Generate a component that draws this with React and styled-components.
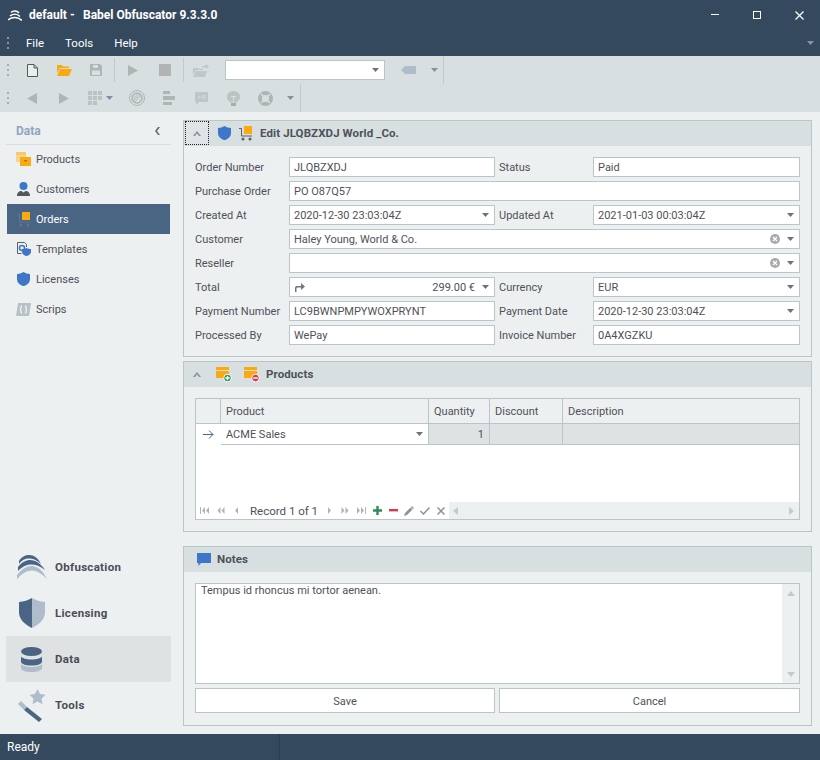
import styled, { createGlobalStyle } from 'styled-components';

const GlobalStyle = createGlobalStyle`
  html, body {
    margin: 0;
    padding: 0;
    background: #ecf0f1;
  }
  * {
    box-sizing: border-box;
  }
`;

const dark = '#35495e';
const line = '#bac5c7';
const text = '#4f5159';
const orange = '#fca80f';
const blue = '#3e77c9';
const slate = '#4a6584';
const mist = '#aebccb';
const off = '#b0b4b5';

const Window = styled.div`
  width: 820px;
  height: 760px;
  display: flex;
  flex-direction: column;
  overflow: hidden;
  font: 11px Roboto, sans-serif;
  color: ${text};
`;

const TitleBar = styled.div`
  height: 28px;
  flex: none;
  display: flex;
  align-items: center;
  padding: 2px 0 0 8px;
  background: ${dark};
  color: #fff;
  font-size: 12px;
  font-weight: 700;
`;

const TitleName = styled.span`
  margin-left: 7px;
  width: 54px;
`;

const WindowButtons = styled.div`
  margin-left: auto;
  display: flex;
`;

const WindowButton = styled.div`
  width: 42px;
  height: 26px;
  display: flex;
  align-items: center;
  justify-content: center;
`;

const MenuBar = styled.div`
  height: 28px;
  flex: none;
  display: flex;
  align-items: center;
  background: ${dark};
  color: #fff;
  padding: 2px 6px 0 0;
  font-size: 11.5px;
`;

const MenuItem = styled.span`
  padding: 0 10px;
  margin-right: 1px;
`;

const MenuEnd = styled.span`
  margin-left: auto;
  display: flex;
`;

const Toolbars = styled.div`
  flex: none;
  background: #d7dfe1;
`;

const ToolRow = styled.div`
  height: 28px;
  display: flex;
  align-items: center;
`;

const GripBox = styled.div`
  width: 16px;
  height: 14px;
  display: flex;
  justify-content: center;
  flex: none;
`;

const ToolButton = styled.div`
  width: ${(p) => p.$w || 32}px;
  height: 28px;
  flex: none;
  display: flex;
  align-items: center;
  justify-content: center;
  gap: ${(p) => p.$gap || 0}px;
`;

const ToolSep = styled.div`
  width: 1px;
  height: ${(p) => p.$h || 24}px;
  margin: ${(p) => p.$m || '0 2px'};
  background: #bfcacc;
  flex: none;
`;

const ToolCombo = styled.div`
  width: 160px;
  height: 20px;
  margin: 0 6px 0 8px;
  background: #fff;
  border: 1px solid ${line};
  display: flex;
  align-items: center;
  justify-content: flex-end;
  padding-right: 5px;
  flex: none;
`;

const Body = styled.div`
  flex: 1;
  min-height: 0;
  display: flex;
`;

const Sidebar = styled.aside`
  width: 183px;
  flex: none;
  display: flex;
  flex-direction: column;
  padding: 8px 12px 6px 6px;
`;

const SideHead = styled.div`
  height: 25px;
  display: flex;
  align-items: center;
  justify-content: space-between;
  padding: 0 11px 3px 10px;
  border-bottom: 1px solid #d7dfe1;
  color: #8fa6bd;
  font-size: 12px;
  font-weight: 700;
`;

const SideItem = styled.div`
  height: 30px;
  margin: 0 1px;
  padding-left: 9px;
  display: flex;
  align-items: center;
  gap: 5px;
  background: ${(p) => (p.$active ? slate : 'transparent')};
  color: ${(p) => (p.$active ? '#fff' : text)};
`;

const SideIcon = styled.span`
  width: 15px;
  height: 16px;
  display: flex;
  align-items: center;
  justify-content: center;
  flex: none;
`;

const SideList = styled.div`
  flex: 1;
  margin-top: -1px;
`;

const NavItem = styled.div`
  height: 46px;
  display: flex;
  align-items: center;
  background: ${(p) => (p.$active ? '#dee2e3' : 'transparent')};
  font-weight: 700;
  font-size: 11.5px;
  letter-spacing: 0.3px;
  color: #4a4d55;
`;

const NavIcon = styled.span`
  width: 49px;
  display: flex;
  justify-content: center;
  padding-left: 2px;
  flex: none;
`;

const Content = styled.main`
  flex: 1;
  min-width: 0;
  padding: 8px 8px 8px 0;
  display: flex;
  flex-direction: column;
`;

const Panel = styled.section`
  border: 1px solid ${line};
  margin-bottom: ${(p) => p.$mb || 0}px;
  height: ${(p) => p.$h}px;
  flex: none;
`;

const PanelHead = styled.header`
  height: 25px;
  padding-bottom: 1px;
  background: #d7dfe1;
  display: flex;
  align-items: center;
  font-size: 11.5px;
  letter-spacing: 0.1px;
  font-weight: 700;
  color: #4f5159;
`;

const Collapse = styled.div`
  width: 24px;
  height: 24px;
  margin-left: 1px;
  border: ${(p) => (p.$focus ? '1px dotted #222' : '1px solid transparent')};
  background: ${(p) => (p.$focus ? '#dfe5e7' : 'transparent')};
  display: flex;
  align-items: center;
  justify-content: center;
  flex: none;
`;

const HeadIcon = styled.span`
  display: flex;
  margin-left: ${(p) => p.$ml || 0}px;
  margin-right: ${(p) => p.$mr || 0}px;
  flex: none;
`;

const Form = styled.div`
  display: grid;
  grid-template-columns: 94px 206px 98px 207px;
  grid-auto-rows: 20px;
  row-gap: 4px;
  padding: 11px 11px 0 11px;
`;

const Label = styled.label`
  display: flex;
  align-items: center;
  white-space: nowrap;
  padding-left: ${(p) => (p.$right ? 4 : 0)}px;
`;

const Field = styled.div`
  grid-column: ${(p) => (p.$wide ? 'span 3' : 'auto')};
  background: #fff;
  border: 1px solid ${line};
  display: flex;
  align-items: center;
  padding: 0 5px 0 4px;
  gap: 7px;
  white-space: nowrap;
`;

const FieldText = styled.span`
  flex: 1;
  text-align: ${(p) => (p.$right ? 'right' : 'left')};
`;

const GridWrap = styled.div`
  margin: 11px 11px 0;
  height: 122px;
  border: 1px solid ${line};
  display: flex;
  flex-direction: column;
  background: #fff;
`;

const GridRow = styled.div`
  display: grid;
  grid-template-columns: 25px 208px 61px 73px 1fr;
  height: ${(p) => p.$h}px;
  flex: none;
`;

const HeadCell = styled.div`
  background: #ecf0f1;
  border-right: 1px solid ${line};
  border-bottom: 1px solid ${line};
  display: flex;
  align-items: center;
  padding-left: 5px;
  &:last-child {
    border-right: 0;
  }
`;

const Cell = styled.div`
  background: ${(p) => (p.$edit ? '#fff' : '#dde3e5')};
  border-right: 1px solid ${line};
  border-bottom: 1px solid ${line};
  display: flex;
  align-items: center;
  justify-content: ${(p) => (p.$end ? 'flex-end' : 'flex-start')};
  padding: 0 5px;
  &:last-child {
    border-right: 0;
  }
`;

const Indicator = styled.div`
  background: #fff;
  display: flex;
  align-items: center;
  justify-content: center;
`;

const GridBlank = styled.div`
  flex: 1;
`;

const GridNav = styled.div`
  height: 17px;
  display: flex;
  align-items: center;
  flex: none;
`;

const NavBtn = styled.span`
  width: 16px;
  height: 17px;
  display: flex;
  align-items: center;
  justify-content: center;
  flex: none;
`;

const RecordText = styled.span`
  width: 77px;
  padding-left: 6px;
  flex: none;
  white-space: nowrap;
  font-size: 11.5px;
`;

const HScroll = styled.div`
  flex: 1;
  align-self: stretch;
  background: #ecf0f1;
  display: flex;
  align-items: center;
  justify-content: space-between;
  padding: 0 5px 0 4px;
`;

const Memo = styled.div`
  margin: 11px 11px 0;
  height: 101px;
  border: 1px solid ${line};
  background: #fff;
  display: flex;
`;

const MemoText = styled.div`
  flex: 1;
  padding: 0 5px;
  line-height: 14px;
`;

const VScroll = styled.div`
  width: 17px;
  background: #ecf0f1;
  display: flex;
  flex-direction: column;
  align-items: center;
  justify-content: space-between;
  padding: 7px 0 6px;
`;

const Buttons = styled.div`
  display: grid;
  grid-template-columns: 300px 301px;
  column-gap: 4px;
  margin: 4px 11px 0;
`;

const Button = styled.div`
  height: 25px;
  padding-top: 1px;
  background: #fff;
  border: 1px solid ${line};
  display: flex;
  align-items: center;
  justify-content: center;
`;

const StatusBar = styled.footer`
  height: 26px;
  flex: none;
  background: ${dark};
  color: #fff;
  font-size: 12px;
  display: flex;
  align-items: center;
`;

const StatusCell = styled.div`
  width: 280px;
  height: 100%;
  padding-left: 7px;
  display: flex;
  align-items: center;
  border-right: 1px solid #2b3d50;
`;

const Grip = ({ color = '#a3adb0' }) => (
  <svg width="2" height="14" viewBox="0 0 2 14">
    <g fill={color}>
      <rect y="1" width="2" height="2" />
      <rect y="6" width="2" height="2" />
      <rect y="11" width="2" height="2" />
    </g>
  </svg>
);

const Caret = ({ color = '#6f7274' }) => (
  <svg width="7" height="4" viewBox="0 0 7 4">
    <path d="M0 0h7L3.5 4z" fill={color} />
  </svg>
);

const Shield = ({ size = 13, color = blue }) => (
  <svg width={size} height={size * 1.1} viewBox="0 0 13 14.3">
    <path d="M6.5 0C8.5 1.3 10.6 1.8 13 2v5.5c0 3.2-2.6 5.4-6.5 6.8C2.6 12.9 0 10.7 0 7.5V2C2.4 1.8 4.5 1.3 6.5 0z" fill={color} />
  </svg>
);

const Cart = ({ body = '#5d6063', box = orange }) => (
  <svg width="14" height="15" viewBox="0 0 14 15">
    <rect x="5" y="0" width="8" height="8" fill={box} />
    <path d="M0 2.5h2.5V10H13" fill="none" stroke={body} />
    <circle cx="4" cy="13" r="1.5" fill={body} />
    <circle cx="11" cy="13" r="1.5" fill={body} />
  </svg>
);

const Chevron = () => (
  <svg width="8" height="5" viewBox="0 0 8 5">
    <path d="M0 5l4-5 4 5-2 0-2-2.5L2 5z" fill="#8b9194" />
  </svg>
);

const FolderMini = ({ kind }) => (
  <svg width="16" height="16" viewBox="0 0 16 16">
    <rect x="0" y="1" width="13" height="3" fill={orange} />
    <rect x="0" y="5" width="13" height="7" fill={orange} />
    <circle cx="11.5" cy="12" r="3.8" fill={kind === 'add' ? '#2e8b57' : '#e0364a'} stroke="#fff" />
    {kind === 'add' && <path d="M11.5 9.8v4.4M9.3 12h4.4" stroke="#fff" strokeWidth="1.3" />}
    {kind === 'remove' && <path d="M9.3 12h4.4" stroke="#fff" strokeWidth="1.5" />}
  </svg>
);

const ClearDot = () => (
  <svg width="10" height="10" viewBox="0 0 10 10">
    <circle cx="5" cy="5" r="5" fill="#a8abac" />
    <path d="M3 3l4 4M7 3l-4 4" stroke="#fff" strokeWidth="1.3" />
  </svg>
);

const NavGlyph = ({ d, color = off }) => (
  <svg width="11" height="9" viewBox="0 0 11 9">
    <path d={d} fill={color} />
  </svg>
);

const navGlyphs = {
  first: 'M1 1h1v7H1zM6 1v7L3 4.5zM10 1v7L7 4.5z',
  prevPage: 'M5.5 1v7L2.5 4.5zM9.5 1v7L6.5 4.5z',
  prev: 'M7 1v7L4 4.5z',
  next: 'M4 1v7l3-3.5z',
  nextPage: 'M1.5 1v7l3-3.5zM5.5 1v7l3-3.5z',
  last: 'M1 1v7l3-3.5zM5 1v7l3-3.5zM9 1h1v7H9z',
};

function ToolbarIcons() {
  return (
    <Toolbars>
      <ToolRow>
        <GripBox><Grip /></GripBox>
        <ToolButton>
          <svg width="11" height="13" viewBox="0 0 11 13">
            <path d="M.5.5H7L10.5 4v8.5H.5zM7 .5V4h3.5" fill="#e9eeef" stroke="#55585a" />
          </svg>
        </ToolButton>
        <ToolButton>
          <svg width="15" height="12" viewBox="0 0 15 12">
            <path d="M0 1h5l1 1.5h6V4H3L0 9z" fill={orange} />
            <path d="M3 5h12l-3 7H0z" fill={orange} />
          </svg>
        </ToolButton>
        <ToolButton>
          <svg width="12" height="12" viewBox="0 0 12 12">
            <path d="M0 0h10l2 2v10H0z" fill={off} />
            <rect x="3" y="1" width="5" height="3" fill="#d7dfe1" />
            <rect x="2" y="6.5" width="8" height="4.5" fill="#d7dfe1" />
          </svg>
        </ToolButton>
        <ToolSep />
        <ToolButton>
          <svg width="10" height="11" viewBox="0 0 10 11"><path d="M0 0l10 5.5L0 11z" fill={off} /></svg>
        </ToolButton>
        <ToolButton>
          <svg width="12" height="12" viewBox="0 0 12 12"><rect width="12" height="12" fill={off} /></svg>
        </ToolButton>
        <ToolSep $m="0 1px 0 2px" />
        <ToolButton>
          <svg width="16" height="13" viewBox="0 0 16 13">
            <path d="M0 4h5l1 1h4v1H3l-3 5z" fill="#bfc6c8" />
            <path d="M3 7h11l-2 6H0z" fill="#bfc6c8" />
            <path d="M9 4c0-2 2-2.5 4-2.5V0l3 2.5L13 5V3.5c-2 0-3 0-4 .5z" fill="#bfc6c8" />
          </svg>
        </ToolButton>
        <ToolCombo><Caret /></ToolCombo>
        <ToolButton $w={34}>
          <svg width="15" height="8" viewBox="0 0 15 8"><path d="M4 0h11v8H4L0 4z" fill={mist} /></svg>
        </ToolButton>
        <ToolButton $w={18}><Caret color="#8c9092" /></ToolButton>
        <ToolSep $h={28} $m="0" />
      </ToolRow>
      <ToolRow>
        <GripBox><Grip /></GripBox>
        <ToolButton>
          <svg width="10" height="11" viewBox="0 0 10 11"><path d="M10 0v11L0 5.5z" fill={off} /></svg>
        </ToolButton>
        <ToolButton>
          <svg width="10" height="11" viewBox="0 0 10 11"><path d="M0 0v11l10-5.5z" fill={off} /></svg>
        </ToolButton>
        <ToolButton $w={41} $gap={4}>
          <svg width="14" height="14" viewBox="0 0 14 14" fill="#bcc2c4">
            <rect width="4" height="4" /><rect x="5" width="4" height="4" /><rect x="10" width="4" height="4" />
            <rect y="5" width="4" height="4" /><rect x="5" y="5" width="4" height="4" /><rect x="10" y="5" width="4" height="4" />
            <rect y="10" width="4" height="4" /><rect x="5" y="10" width="4" height="4" />
          </svg>
          <Caret color="#7f8fa8" />
        </ToolButton>
        <ToolButton>
          <svg width="16" height="16" viewBox="0 0 16 16" fill="none" stroke={off}>
            <circle cx="8" cy="8" r="7.5" />
            <circle cx="8" cy="8" r="5" strokeWidth="1.5" />
            <path d="M4 11l7-7M5.5 12L12 5.5M4 8.5L8.5 4" />
          </svg>
        </ToolButton>
        <ToolButton>
          <svg width="12" height="14" viewBox="0 0 12 14" fill={off}>
            <rect width="7" height="3" /><rect y="5" width="12" height="4" /><rect y="11" width="9" height="3" />
          </svg>
        </ToolButton>
        <ToolButton>
          <svg width="13" height="13" viewBox="0 0 13 13">
            <path d="M0 0h13v10H4l-3 3v-3H0z" fill="#c0c6c8" />
            <path d="M3 5h3M8 3v4M10 3v4" stroke="#d7dfe1" />
          </svg>
        </ToolButton>
        <ToolButton>
          <svg width="13" height="15" viewBox="0 0 13 15">
            <path d="M6.5 0C10 0 13 2.5 13 6c0 2-1 3-2.5 4.5v1h-8v-1C1 9 0 8 0 6 0 2.5 3 0 6.5 0z" fill="#bdc2c3" />
            <path d="M4 5.5h5M6.5 5.5V11" stroke="#d7dfe1" />
            <rect x="4" y="12" width="5" height="3" fill="#a8acad" />
          </svg>
        </ToolButton>
        <ToolButton>
          <svg width="15" height="15" viewBox="0 0 15 15" fill="none">
            <circle cx="7.5" cy="7.5" r="5.5" stroke={off} strokeWidth="4" />
            <path d="M3 3l2.5 2.5M12 3L9.5 5.5M3 12l2.5-2.5M12 12L9.5 9.5" stroke="#d7dfe1" strokeWidth="1.5" />
          </svg>
        </ToolButton>
        <ToolButton $w={19}><Caret color="#8c9092" /></ToolButton>
        <ToolSep $h={28} $m="0" />
      </ToolRow>
    </Toolbars>
  );
}

function SideBar() {
  return (
    <Sidebar>
      <SideHead>
        <span>Data</span>
        <svg width="5" height="8" viewBox="0 0 5 8">
          <path d="M5 0L2 4l3 4H3L0 4l3-4z" fill="#666a6d" />
        </svg>
      </SideHead>
      <SideList>
        <SideItem>
          <SideIcon>
            <svg width="15" height="14" viewBox="0 0 15 14">
              <rect x="0" y="0" width="10" height="3" fill="#f7c670" />
              <rect x="0" y="3" width="10" height="7" fill="#f9d48c" />
              <rect x="4" y="5" width="11" height="9" fill={orange} />
              <rect x="8" y="8" width="3" height="1.5" fill="#b97500" />
            </svg>
          </SideIcon>
          Products
        </SideItem>
        <SideItem>
          <SideIcon>
            <svg width="13" height="14" viewBox="0 0 13 14">
              <circle cx="6.5" cy="4" r="4" fill={blue} />
              <path d="M0 14c0-3.5 2-5 4.5-5l2 1.5L8.5 9C11 9 13 10.5 13 14z" fill="#55585a" />
            </svg>
          </SideIcon>
          Customers
        </SideItem>
        <SideItem $active>
          <SideIcon>
            <svg width="14" height="15" viewBox="0 0 14 15">
              <rect x="5" y="0" width="8" height="8" fill={orange} />
              <path d="M0 2.5h2.5V10H13" fill="none" stroke="#5f7590" />
              <circle cx="4" cy="13" r="1.5" fill="#5f7590" />
              <circle cx="11" cy="13" r="1.5" fill="#5f7590" />
            </svg>
          </SideIcon>
          Orders
        </SideItem>
        <SideItem>
          <SideIcon>
            <svg width="14" height="14" viewBox="0 0 14 14">
              <path d="M.5.5h7l2 2V5M.5.5v11h4" fill="none" stroke="#5c5f62" />
              <circle cx="5" cy="6" r="2.5" fill="none" stroke={blue} strokeWidth="1.5" />
              <path d="M9.5 6c1.5.8 3 1 4.5 1v3c0 2-2 3.3-4.5 4C7 13.300 5 12 5 10V7c1.500 0 3-.2 4.500-1z" fill={blue} />
            </svg>
          </SideIcon>
          Templates
        </SideItem>
        <SideItem>
          <SideIcon><Shield size={13} /></SideIcon>
          Licenses
        </SideItem>
        <SideItem>
          <SideIcon>
            <svg width="15" height="13" viewBox="0 0 15 13">
              <path d="M2 0h13l-2 13H0z" fill="#b9c1c8" />
              <path d="M6 3H5v3l-1 .5 1 .5v3h1M9 3h1v3l1 .5-1 .5v3H9" fill="none" stroke="#fff" />
            </svg>
          </SideIcon>
          Scrips
        </SideItem>
      </SideList>
      <NavItem>
        <NavIcon>
          <svg width="30" height="24" viewBox="0 0 30 24">
            <path d="M2 6C5 1 9 0 12 0c5 0 9 3 12 9-4-4-8-5.5-12-5.5C8 3.5 5 5 2 9z" fill={slate} />
            <path d="M1 12C5 7 9 5 13 5c6 0 11 4 15 10-5-4-9-5.5-14-5.5C9 9.5 5 12 1 16z" fill={slate} />
            <path d="M0 20c5-6 10-9 14-9 7 0 12 5 16 13-5-5-10-8.5-15-8.5C9 15.5 5 19 0 24z" fill={mist} />
          </svg>
        </NavIcon>
        Obfuscation
      </NavItem>
      <NavItem>
        <NavIcon>
          <svg width="26" height="30" viewBox="0 0 26 30">
            <path d="M13 0C9 2.5 5 3.5 0 4v10c0 7 5 12 13 16z" fill={slate} />
            <path d="M13 0c4 2.5 8 3.5 13 4v10c0 7-5 12-13 16z" fill={mist} />
          </svg>
        </NavIcon>
        Licensing
      </NavItem>
      <NavItem $active>
        <NavIcon>
          <svg width="21" height="25" viewBox="0 0 21 25">
            <path d="M0 17v4c0 2.5 4.5 4 10.5 4S21 23.5 21 21v-4c-1.5 2-5.5 3-10.5 3S1.5 19 0 17z" fill={mist} />
            <path d="M0 9.5v5c0 2.5 4.5 4 10.5 4s10.500-1.5 10.500-4v-5c-1.500 2-5.500 3-10.500 3S1.500 11.500 0 9.500z" fill={slate} />
            <ellipse cx="10.5" cy="4.5" rx="10.5" ry="4.5" fill={slate} />
          </svg>
        </NavIcon>
        Data
      </NavItem>
      <NavItem>
        <NavIcon>
          <svg width="28" height="33" viewBox="0 0 28 33">
            <path d="M19.5 0l2.5 5 5.5.8-4 3.9 1 5.5-5-2.6-5 2.6 1-5.5-4-3.9 5.5-.8z" fill={mist} />
            <path d="M0 15l3-3 6 6-3 3z" fill={mist} />
            <path d="M6 21l3-3 15 12-3 3z" fill={slate} />
          </svg>
        </NavIcon>
        Tools
      </NavItem>
    </Sidebar>
  );
}

function OrderForm() {
  return (
    <Form>
      <Label>Order Number</Label>
      <Field><FieldText>JLQBZXDJ</FieldText></Field>
      <Label $right>Status</Label>
      <Field><FieldText>Paid</FieldText></Field>

      <Label>Purchase Order</Label>
      <Field $wide><FieldText>PO O87Q57</FieldText></Field>

      <Label>Created At</Label>
      <Field><FieldText>2020-12-30 23:03:04Z</FieldText><Caret /></Field>
      <Label $right>Updated At</Label>
      <Field><FieldText>2021-01-03 00:03:04Z</FieldText><Caret /></Field>

      <Label>Customer</Label>
      <Field $wide><FieldText>Haley Young, World &amp; Co.</FieldText><ClearDot /><Caret /></Field>

      <Label>Reseller</Label>
      <Field $wide><FieldText /><ClearDot /><Caret /></Field>

      <Label>Total</Label>
      <Field>
        <svg width="11" height="9" viewBox="0 0 11 9">
          <path d="M1 9V5c0-1.5 1-2 2-2h4V0l4 3.5L7 7V4.5H3.5C3 4.5 2.5 5 2.5 5.5V9z" fill="#74777a" />
        </svg>
        <FieldText $right>299.00 €</FieldText>
        <Caret />
      </Field>
      <Label $right>Currency</Label>
      <Field><FieldText>EUR</FieldText><Caret /></Field>

      <Label>Payment Number</Label>
      <Field><FieldText>LC9BWNPMPYWOXPRYNT</FieldText></Field>
      <Label $right>Payment Date</Label>
      <Field><FieldText>2020-12-30 23:03:04Z</FieldText><Caret /></Field>

      <Label>Processed By</Label>
      <Field><FieldText>WePay</FieldText></Field>
      <Label $right>Invoice Number</Label>
      <Field><FieldText>0A4XGZKU</FieldText></Field>
    </Form>
  );
}

function ProductGrid() {
  return (
    <GridWrap>
      <GridRow $h={25}>
        <HeadCell />
        <HeadCell>Product</HeadCell>
        <HeadCell>Quantity</HeadCell>
        <HeadCell>Discount</HeadCell>
        <HeadCell>Description</HeadCell>
      </GridRow>
      <GridRow $h={21}>
        <Indicator>
          <svg width="11" height="9" viewBox="0 0 11 9" fill="none" stroke={slate}>
            <path d="M0 4.5h10M6 .5l4 4-4 4" />
          </svg>
        </Indicator>
        <Cell $edit>
          <FieldText>ACME Sales</FieldText>
          <Caret />
        </Cell>
        <Cell $end>1</Cell>
        <Cell />
        <Cell />
      </GridRow>
      <GridBlank />
      <GridNav>
        <NavBtn><NavGlyph d={navGlyphs.first} /></NavBtn>
        <NavBtn><NavGlyph d={navGlyphs.prevPage} /></NavBtn>
        <NavBtn><NavGlyph d={navGlyphs.prev} /></NavBtn>
        <RecordText>Record 1 of 1</RecordText>
        <NavBtn><NavGlyph d={navGlyphs.next} /></NavBtn>
        <NavBtn><NavGlyph d={navGlyphs.nextPage} /></NavBtn>
        <NavBtn><NavGlyph d={navGlyphs.last} /></NavBtn>
        <NavBtn>
          <svg width="9" height="9" viewBox="0 0 9 9"><path d="M3.3 0h2.4v3.3H9v2.4H5.7V9H3.3V5.7H0V3.3h3.3z" fill="#2e8b57" /></svg>
        </NavBtn>
        <NavBtn>
          <svg width="9" height="3" viewBox="0 0 9 3"><rect width="9" height="2.4" fill="#e0364a" /></svg>
        </NavBtn>
        <NavBtn>
          <svg width="10" height="10" viewBox="0 0 10 10"><path d="M0 10l1-3 5.5-5.5 2 2L3 9zM7 1l1-1 2 2-1 1z" fill="#8f9395" /></svg>
        </NavBtn>
        <NavBtn>
          <svg width="10" height="8" viewBox="0 0 10 8"><path d="M.5 4l3 3L9.5.5" fill="none" stroke="#8f9395" strokeWidth="1.5" /></svg>
        </NavBtn>
        <NavBtn>
          <svg width="8" height="8" viewBox="0 0 8 8"><path d="M.5.5l7 7M7.5.5l-7 7" stroke="#8f9395" strokeWidth="1.5" /></svg>
        </NavBtn>
        <HScroll>
          <svg width="5" height="8" viewBox="0 0 5 8"><path d="M5 0v8L0 4z" fill="#c4c9cb" /></svg>
          <svg width="5" height="8" viewBox="0 0 5 8"><path d="M0 0v8l5-4z" fill="#c4c9cb" /></svg>
        </HScroll>
      </GridNav>
    </GridWrap>
  );
}

export default function App() {
  return (
    <>
      <GlobalStyle />
      <Window>
        <TitleBar>
          <svg width="14" height="11" viewBox="0 0 14 11" fill="none" stroke="#fff">
            <path d="M3 2.5C5 .5 9 .5 11 3" strokeWidth="1.5" />
            <path d="M2 6C5 3.5 9 3.5 12 6.5" strokeWidth="1.5" />
            <path d="M0 10C4 6.5 10 6.5 14 10.5" strokeWidth="1.5" />
          </svg>
          <TitleName>default -</TitleName>
          Babel Obfuscator 9.3.3.0
          <WindowButtons>
            <WindowButton>
              <svg width="8" height="2" viewBox="0 0 8 2"><rect width="8" height="1" fill="#fff" /></svg>
            </WindowButton>
            <WindowButton>
              <svg width="8" height="9" viewBox="0 0 8 9">
                <rect x=".5" y=".5" width="7" height="7" fill="none" stroke="#fff" />
              </svg>
            </WindowButton>
            <WindowButton>
              <svg width="9" height="9" viewBox="0 0 9 9">
                <path d="M.5.5l8 8M8.5.5l-8 8" stroke="#fff" strokeWidth="1.2" />
              </svg>
            </WindowButton>
          </WindowButtons>
        </TitleBar>
        <MenuBar>
          <GripBox><Grip color="#8795a3" /></GripBox>
          <MenuItem>File</MenuItem>
          <MenuItem>Tools</MenuItem>
          <MenuItem>Help</MenuItem>
          <MenuEnd><Caret color="#8795a3" /></MenuEnd>
        </MenuBar>
        <ToolbarIcons />
        <Body>
          <SideBar />
          <Content>
            <Panel $h={237} $mb={4}>
              <PanelHead>
                <Collapse $focus><Chevron /></Collapse>
                <HeadIcon $ml={9} $mr={8}><Shield size={13} /></HeadIcon>
                <HeadIcon $mr={7}><Cart /></HeadIcon>
                Edit JLQBZXDJ World _Co.
              </PanelHead>
              <OrderForm />
            </Panel>
            <Panel $h={171} $mb={14}>
              <PanelHead>
                <Collapse><Chevron /></Collapse>
                <HeadIcon $ml={7} $mr={12}><FolderMini kind="add" /></HeadIcon>
                <HeadIcon $mr={6}><FolderMini kind="remove" /></HeadIcon>
                Products
              </PanelHead>
              <ProductGrid />
            </Panel>
            <Panel $h={180}>
              <PanelHead>
                <HeadIcon $ml={13} $mr={6}>
                  <svg width="14" height="13" viewBox="0 0 14 13">
                    <path d="M0 0h14v10H4l-2.5 3v-3H0z" fill={blue} />
                  </svg>
                </HeadIcon>
                Notes
              </PanelHead>
              <Memo>
                <MemoText>Tempus id rhoncus mi tortor aenean.</MemoText>
                <VScroll>
                  <svg width="8" height="5" viewBox="0 0 8 5"><path d="M4 0l4 5H0z" fill="#c4c9cb" /></svg>
                  <svg width="8" height="5" viewBox="0 0 8 5"><path d="M0 0h8L4 5z" fill="#c4c9cb" /></svg>
                </VScroll>
              </Memo>
              <Buttons>
                <Button>Save</Button>
                <Button>Cancel</Button>
              </Buttons>
            </Panel>
          </Content>
        </Body>
        <StatusBar>
          <StatusCell>Ready</StatusCell>
        </StatusBar>
      </Window>
    </>
  );
}
